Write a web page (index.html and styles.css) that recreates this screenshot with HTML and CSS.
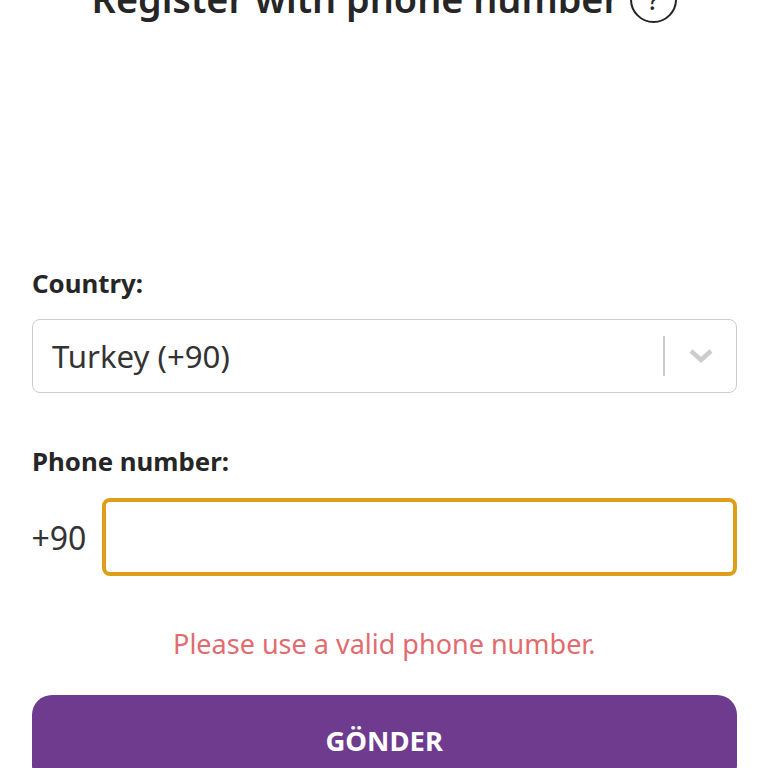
FILE: index.html
```html
<!DOCTYPE html>
<html lang="en">
<head>
  <meta charset="UTF-8" />
  <title>Register with phone number</title>
  <link rel="stylesheet" href="styles.css">
</head>
<body>
  <div class="page">
    <div class="title-row">
      <h1>Register with phone number</h1>
      <span class="help">?</span>
    </div>

    <form class="register-form">
      <label class="field-label">Country:</label>
      <div class="select-box">
        <span class="select-value">Turkey (+90)</span>
        <span class="select-divider"></span>
        <svg class="select-arrow" width="26" height="16" viewBox="0 0 26 16">
          <path d="M3 3 L13 12 L23 3" fill="none" stroke="#cccccc" stroke-width="4.5"/>
        </svg>
      </div>

      <label class="field-label phone-label">Phone number:</label>
      <div class="phone-row">
        <span class="prefix">+90</span>
        <div class="phone-input"></div>
      </div>

      <p class="error">Please use a valid phone number.</p>

      <button type="button" class="submit-button">GÖNDER</button>
    </form>
  </div>
</body>
</html>
```

FILE: styles.css
```css
* {
  box-sizing: border-box;
}

html, body {
  height: 768px;
  margin: 0;
  overflow: hidden;
  background: #ffffff;
}

body {
  font-family: 'Noto Sans', sans-serif;
  color: #262626;
}

.page {
  padding: 0 31px 0 31.5px;
}

.title-row {
  display: flex;
  justify-content: center;
  align-items: center;
  gap: 10px;
  height: 48px;
  margin-top: -25px;
}

h1 {
  margin: 0;
  font-size: 37.8px;
  line-height: 48px;
  font-weight: 600;
}

.help {
  width: 47px;
  height: 47px;
  border: 2px solid #262626;
  border-radius: 50%;
  display: flex;
  justify-content: center;
  align-items: center;
  font-size: 28px;
}

.register-form {
  margin-top: 242px;
}

.field-label {
  display: block;
  padding-left: 0.5px;
  font-size: 25.8px;
  line-height: 36px;
  font-weight: 700;
}

.select-box {
  display: flex;
  align-items: center;
  height: 74px;
  margin-top: 18px;
  padding: 0 22.5px 0 19.5px;
  border: 1.5px solid #cccccc;
  border-radius: 8px;
}

.select-value {
  flex: 1;
  font-size: 31.2px;
  color: #333333;
}

.select-divider {
  width: 2px;
  height: 40px;
  margin-right: 23px;
  background: #cccccc;
}

.phone-label {
  margin-top: 50px;
}

.phone-row {
  display: flex;
  align-items: center;
  gap: 16px;
  margin-top: 19px;
}

.prefix {
  font-size: 32px;
  color: #333333;
}

.phone-input {
  flex: 1;
  height: 78px;
  border: 4px solid #dd9e1a;
  border-radius: 8px;
}

.error {
  margin: 48px 0 0;
  text-align: center;
  font-size: 27px;
  line-height: 40px;
  color: #e06c70;
}

.submit-button {
  display: block;
  width: 100%;
  height: 90px;
  margin-top: 31px;
  border: none;
  border-radius: 20px;
  background: #6f3b8f;
  color: #ffffff;
  font-family: inherit;
  font-size: 27.5px;
  font-weight: 700;
}
```
